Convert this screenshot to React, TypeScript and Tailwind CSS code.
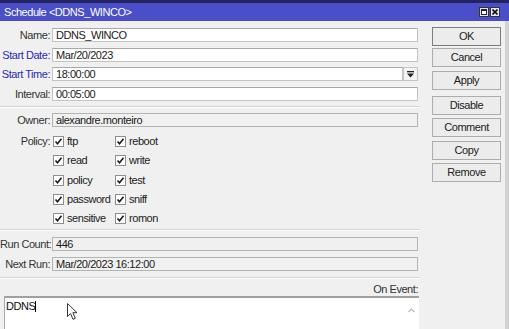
import React from "react";

const font = "font-['Liberation_Sans',Arial,sans-serif]";

function Label({ text, blue }: { text: string; blue?: boolean }) {
  return (
    <div
      className={`w-[52px] shrink-0 pr-[2px] text-right leading-[14px] whitespace-nowrap ${
        blue ? "text-[#2a2ab5]" : "text-[#333333]"
      }`}
    >
      {text}
    </div>
  );
}

function Field({ value, ro }: { value: string; ro?: boolean }) {
  return (
    <div
      className={`flex-1 h-[14px] border pl-[3px] leading-[12px] text-[#1a1a1a] whitespace-nowrap ${
        ro
          ? "bg-[#f0f0f0] border-[#b4b4b4]"
          : "bg-white border-[#c4c4c4] border-t-[#a8a8a8]"
      }`}
    >
      {value}
    </div>
  );
}

function Row({
  label,
  value,
  blue,
  ro,
  mt,
  drop,
}: {
  label: string;
  value: string;
  blue?: boolean;
  ro?: boolean;
  mt: string;
  drop?: boolean;
}) {
  return (
    <div className={`flex items-center h-[14px] pr-[2px] ${mt}`}>
      <Label text={label} blue={blue} />
      <Field value={value} ro={ro} />
      {drop && (
        <div className="w-[15px] h-[14px] border border-[#c4c4c4] bg-[#f4f4f4] flex items-center justify-center">
          <svg width="7" height="7" viewBox="0 0 7 7">
            <rect x="0" y="0" width="7" height="1.3" fill="#222" />
            <path d="M0 2.5 L7 2.5 L3.5 6.5 Z" fill="#222" />
          </svg>
        </div>
      )}
    </div>
  );
}

function Check({ text }: { text: string }) {
  return (
    <div className="flex items-center w-[62px]">
      <div className="w-[11px] h-[11px] border border-[#8f8f8f] bg-white flex items-center justify-center shrink-0">
        <svg width="9" height="9" viewBox="0 0 9 9">
          <path d="M1.5 4.5 L3.5 6.8 L7.5 1.8" stroke="#1a1a1a" strokeWidth="1.6" fill="none" />
        </svg>
      </div>
      <span className="ml-[3px] leading-[12px] text-[#222] whitespace-nowrap">{text}</span>
    </div>
  );
}

function PolicyRow({ a, b, label, mt }: { a: string; b: string; label?: string; mt: string }) {
  return (
    <div className={`flex items-center h-[14px] ${mt}`}>
      <Label text={label ?? ""} />
      <div className="ml-[1px]">
        <Check text={a} />
      </div>
      <Check text={b} />
    </div>
  );
}

function Sep({ mt }: { mt: string }) {
  return <div className={`h-[2px] border-t border-[#d4d4d4] border-b border-b-white ${mt}`} />;
}

function Btn({ text, mt, def }: { text: string; mt: string; def?: boolean }) {
  return (
    <div
      className={`h-[19px] w-[69px] flex items-center justify-center border bg-[#ececec] text-[#222] ${
        def ? "border-[#7d7d7d]" : "border-[#adadad]"
      } ${mt}`}
    >
      {text}
    </div>
  );
}

export default function App() {
  return (
    <div
      className={`${font} text-[11px] tracking-[-0.45px] w-[509px] h-[329px] bg-[#f0f0f0] flex flex-col overflow-hidden`}
    >
      <div className="h-[21px] shrink-0 border-t-[3px] border-[#23235e] bg-[#4a4fc9] flex items-center pl-[4px] pr-[9px]">
        <span className="text-white leading-[12px] flex-1">Schedule &lt;DDNS_WINCO&gt;</span>
        <div className="w-[10px] h-[10px] bg-[#e6e6e6] border border-[#333] flex items-center justify-center">
          <div className="w-[6px] h-[6px] border border-[#222] border-t-2 bg-white" />
        </div>
        <div className="ml-[1px] w-[10px] h-[10px] bg-[#e6e6e6] border border-[#333] flex items-center justify-center">
          <svg width="6" height="6" viewBox="0 0 6 6">
            <path d="M0.5 0.5 L5.5 5.5 M5.5 0.5 L0.5 5.5" stroke="#111" strokeWidth="1.6" />
          </svg>
        </div>
      </div>
      <div className="flex flex-1 min-h-0 border-r-4 border-[#d2d2d2]">
        <div className="w-[420px] shrink-0 flex flex-col">
          <Row label="Name:" value="DDNS_WINCO" mt="mt-[7px]" />
          <Row label="Start Date:" value="Mar/20/2023" blue mt="mt-[6px]" />
          <Row label="Start Time:" value="18:00:00" blue mt="mt-[5px]" drop />
          <Row label="Interval:" value="00:05:00" mt="mt-[6px]" />
          <Sep mt="mt-[5px]" />
          <Row label="Owner:" value="alexandre.monteiro" ro mt="mt-[5px]" />
          <PolicyRow label="Policy:" a="ftp" b="reboot" mt="mt-[7px]" />
          <PolicyRow a="read" b="write" mt="mt-[5px]" />
          <PolicyRow a="policy" b="test" mt="mt-[6px]" />
          <PolicyRow a="password" b="sniff" mt="mt-[5px]" />
          <PolicyRow a="sensitive" b="romon" mt="mt-[5px]" />
          <Sep mt="mt-[4px]" />
          <Row label="Run Count:" value="446" ro mt="mt-[6px]" />
          <Row label="Next Run:" value="Mar/20/2023 16:12:00" ro mt="mt-[6px]" />
          <Sep mt="mt-[6px]" />
          <div className="mt-[4px] h-[12px] pr-[2px] text-right leading-[12px] text-[#333]">On Event:</div>
          <div className="relative mt-[1px] ml-[4px] mr-[1px] flex-1 bg-white border-l border-[#a8a8a8] border-t-2 border-t-[#a0a0a0] flex">
            <div className="flex-1 pl-[1px] pt-[2px] leading-[12px] text-[#111]">
              DDNS<span className="inline-block w-[1px] h-[11px] bg-black align-[-2px]" />
            </div>
            <div className="w-[15px] flex justify-center pt-[10px]">
              <svg width="7" height="5" viewBox="0 0 7 5">
                <path d="M0.5 4 L3.5 1 L6.5 4" stroke="#b8b8b8" strokeWidth="1.2" fill="none" />
              </svg>
            </div>
            <svg className="absolute left-[62px] top-[5px]" width="12" height="18" viewBox="0 0 12 18">
              <path
                d="M0.5 0.5 L0.5 13.5 L3.6 10.6 L6 16.3 L8.3 15.3 L5.9 9.7 L10 9.7 Z"
                fill="white"
                stroke="#333"
                strokeWidth="1"
              />
            </svg>
          </div>
        </div>
        <div className="flex flex-col pl-[12px]">
          <Btn text="OK" mt="mt-[6px]" def />
          <Btn text="Cancel" mt="mt-[2px]" />
          <Btn text="Apply" mt="mt-[4px]" />
          <Btn text="Disable" mt="mt-[6px]" />
          <Btn text="Comment" mt="mt-[3px]" />
          <Btn text="Copy" mt="mt-[4px]" />
          <Btn text="Remove" mt="mt-[3px]" />
        </div>
      </div>
    </div>
  );
}
